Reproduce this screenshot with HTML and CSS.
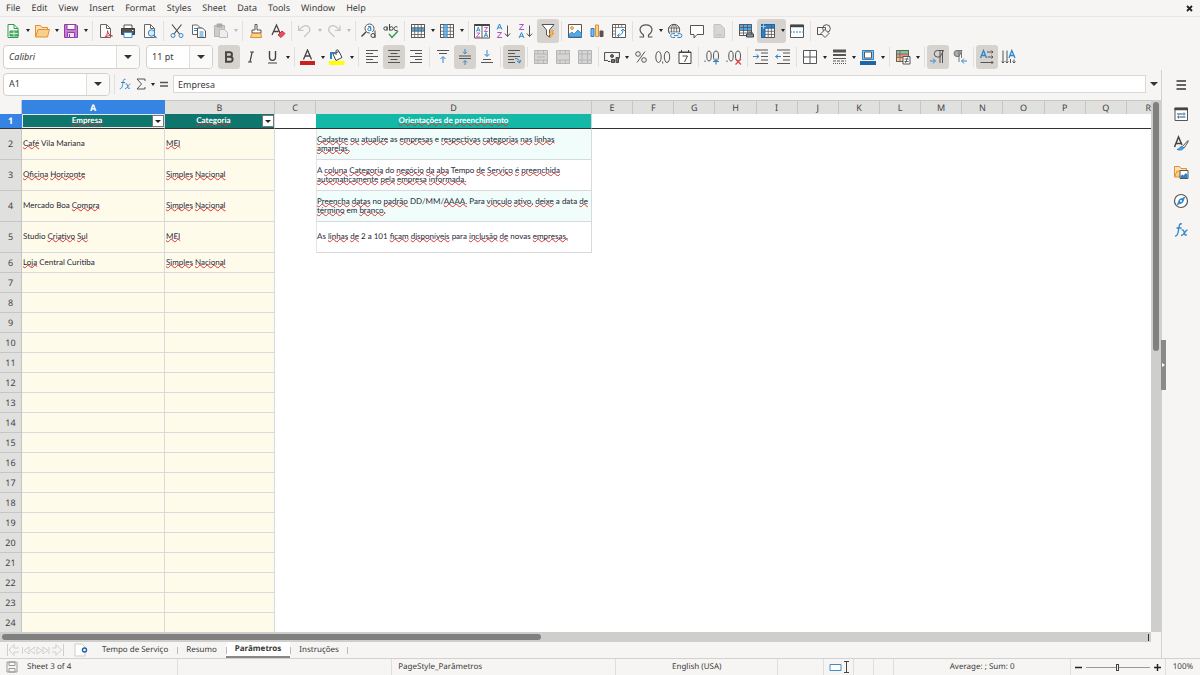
FILE: index.html
```html
<!DOCTYPE html>
<html lang="en">
<head>
<meta charset="utf-8">
<title>Parâmetros - Calc</title>
<link rel="stylesheet" href="styles.css">
</head>
<body>
<nav class="menubar">
  <button>File</button><button>Edit</button><button>View</button><button>Insert</button><button>Format</button><button>Styles</button><button>Sheet</button><button>Data</button><button>Tools</button><button>Window</button><button>Help</button>
  <button class="close" aria-label="Close document"><svg class="s7" viewBox="0 0 7 7"><path d="M1 1l5 5M6 1L1 6" stroke-width="1.8"/></svg></button>
</nav>

<div class="toolbar">
  <button class="tb" aria-label="New"><svg viewBox="0 0 16 16"><path d="M3 1.500h6l4 4v9H3z" fill="#fff" stroke="#2e9b4f"/><path d="M9 1.500v4h4" stroke="#2e9b4f"/><path d="M5 8h8v5H5z" fill="#58b872" stroke="#2e9b4f"/><path d="M5 10.500h8M9 8v5" stroke="#fff" stroke-width=".7"/></svg></button><button class="drop" aria-label="New options"></button>
  <button class="tb" aria-label="Open"><svg viewBox="0 0 16 16"><path d="M1.500 14V2.500h5l1.500 2h5.500V7" fill="#fde3b5" stroke="#e0912f"/><path d="M1.500 14l2.500-7.500h11.500L13.500 14z" fill="#f9cf8a" stroke="#e0912f"/></svg></button><button class="drop" aria-label="Open options"></button>
  <button class="tb" aria-label="Save"><svg viewBox="0 0 16 16"><path d="M1.500 1.500h11.500l1.500 1.500v11.500h-13z" fill="#c77ad6" stroke="#8e3fa3"/><path d="M4 1.500h8v5H4z" fill="#fff" stroke="#8e3fa3"/><path d="M4.500 9.500h7v5h-7z" fill="#f3e1f6" stroke="#8e3fa3"/><path d="M6.500 11v3" stroke="#8e3fa3"/></svg></button><button class="drop" aria-label="Save options"></button>
  <i class="sep"></i>
  <button class="tb" aria-label="Export as PDF"><svg viewBox="0 0 16 16"><path d="M2.500 1.500h6l4 4v9h-10z" fill="#fafafa" stroke="#666"/><path d="M8.500 1.500v4h4" stroke="#666"/><path d="M7 14c2-2 3-4 2.500-6.500M9.500 8c.5 3 2 4.500 5 5-3-.8-5-.5-7.500 1.500" stroke="#d9363e"/></svg></button>
  <button class="tb" aria-label="Print"><svg viewBox="0 0 16 16"><path d="M4 5V2h8v3" fill="#fff"/><path d="M1.500 5.500h13v6h-13z" fill="#4d5357" stroke="#3a3a38"/><path d="M4 9.500h8v5H4z" fill="#fff" stroke="#3c8fd0"/><path d="M12 7.500h1.500" stroke="#fff"/></svg></button>
  <button class="tb" aria-label="Print preview"><svg viewBox="0 0 16 16"><path d="M2.500 1.500h6l4 4v9h-10z" fill="#fafafa" stroke="#666"/><path d="M8.500 1.500v4h4" stroke="#666"/><circle cx="9.500" cy="10" r="3.200" fill="#d7ebfa" stroke="#2f86cb"/><path d="M11.800 12.300l2.700 2.700" stroke="#2f86cb" stroke-width="1.300"/></svg></button>
  <i class="sep"></i>
  <button class="tb" aria-label="Cut"><svg viewBox="0 0 16 16"><path d="M3 1.500l7.500 9.500M12.500 1.500L5 11" stroke="#444" stroke-width="1.100"/><circle cx="4" cy="12.500" r="2" stroke="#2f86cb"/><circle cx="12" cy="12.500" r="2" stroke="#2f86cb"/></svg></button>
  <button class="tb" aria-label="Copy"><svg viewBox="0 0 16 16"><path d="M1.500 2h5l3 3v6.500h-8z" fill="#fff" stroke="#666"/><path d="M3 5.500h3M3 7.500h3" stroke="#2f86cb"/><path d="M6.500 5h5l3 3v6.500h-8z" fill="#fff" stroke="#555"/><path d="M8.500 9h4M8.500 11h4M8.500 13h4" stroke="#2f86cb"/></svg></button>
  <button class="tb" disabled aria-label="Paste"><svg viewBox="0 0 16 16"><path d="M1.500 2.500h10v11h-10z" fill="#ccc" stroke="#b5b5b5"/><path d="M4 1h5v3H4z" fill="#aaa" stroke="#aaa"/><path d="M6.500 6.500h5l3 3v5h-8z" fill="#eee" stroke="#bbb"/></svg></button><button class="drop off" disabled aria-label="Paste options"></button>
  <i class="sep"></i>
  <button class="tb" aria-label="Clone formatting"><svg viewBox="0 0 16 16"><path d="M7 1.500h2V7h4v3H4V7h3z" fill="#fff" stroke="#555"/><path d="M4 10.500h9l.5 4h-11z" fill="#fbd28e" stroke="#e0912f"/></svg></button>
  <button class="tb" aria-label="Clear formatting"><svg viewBox="0 0 16 16"><path d="M2 12L6.500 2 10 10M3.500 8.500h5" stroke="#444" stroke-width="1.300"/><path d="M8 12l4-4 3 2.500-4 4z" fill="#e8505b" stroke="#c9303c"/></svg></button>
  <i class="sep"></i>
  <button class="tb" disabled aria-label="Undo"><svg viewBox="0 0 16 16"><path d="M1.500 2.500v5h5M2 7l4-3.500c4-2.500 8 1 6.500 5L7 14" stroke="#c4c4c4" stroke-width="1.200"/></svg></button><button class="drop off" disabled aria-label="Undo list"></button>
  <button class="tb" disabled aria-label="Redo"><svg viewBox="0 0 16 16"><path d="M14 2.500v5H9M13.500 7l-4-3.500c-4-2.500-8 1-6.500 5L8.500 14" stroke="#c4c4c4" stroke-width="1.200"/></svg></button><button class="drop off" disabled aria-label="Redo list"></button>
  <i class="sep"></i>
  <button class="tb" aria-label="Find and replace"><svg viewBox="0 0 16 16"><circle cx="8.500" cy="5.500" r="4.500" fill="#fff" stroke="#555"/><path d="M5 9l-4.500 4.500" stroke="#444" stroke-width="1.500"/><circle cx="8.300" cy="6.200" r="1.500" stroke="#2f86cb"/><path d="M7 3.500h2.800v4.500" stroke="#2f86cb"/><path d="M9 9h6v6H9z" fill="#f6f5f4" stroke="none"/><circle cx="12" cy="12.500" r="2" stroke="#444"/><path d="M14 7.500V15" stroke="#444"/></svg></button>
  <button class="tb" aria-label="Spelling"><svg viewBox="0 0 16 16"><circle cx="2.500" cy="5.500" r="1.700" stroke="#444"/><path d="M4.200 3.500v4M6.500 1v6.500M14.500 4.300a2 2 0 100 2.700" stroke="#444"/><circle cx="8.300" cy="5.500" r="1.800" stroke="#444"/><path d="M6 11l3 3.500L15 8" stroke="#2e9b4f" stroke-width="1.400"/></svg></button>
  <i class="sep"></i>
  <button class="tb" aria-label="Row"><svg viewBox="0 0 16 16"><path d="M1.500 1.500h13v13h-13z" fill="#fff"/><path d="M2 4.700h12v3.500H2z" fill="#4ea9ea" stroke="none"/><path d="M1.500 1.500h13v13h-13zM1.500 4.700h13M1.500 8.200h13M1.500 11.500h13M4.700 1.500v13M8 1.500v13M11.300 1.500v13" stroke="#555" stroke-width=".8"/></svg></button><button class="drop" aria-label="Row options"></button>
  <button class="tb" aria-label="Column"><svg viewBox="0 0 16 16"><path d="M1.500 1.500h13v13h-13z" fill="#fff"/><path d="M1.500 1.500h13v13h-13zM1.500 4.700h13M1.500 8.200h13M1.500 11.500h13M4.700 1.500v13M8 1.500v13M11.300 1.500v13" stroke="#555" stroke-width=".8"/><path d="M4.700 1.500h4v13h-4z" fill="#4ea9ea" fill-opacity=".8" stroke="none"/></svg></button><button class="drop" aria-label="Column options"></button>
  <i class="sep"></i>
  <button class="tb" aria-label="Sort"><svg viewBox="0 0 16 16"><path d="M.5 1.500h15v13.500H.5zM8 3v12" fill="#fff" stroke="#555"/><path d="M.5 2h15" stroke="#444" stroke-width="2"/><path d="M2.500 8.500l1.800-4.500 1.700 4.500M3 7.200h2.500M10.200 14l1.800-4.500 1.700 4.500M10.700 12.700h2.500" stroke="#2f86cb" stroke-width=".9"/><path d="M2.500 10h3.300l-3.300 4h3.500M10.300 4.500h3.300l-3.300 4h3.500" stroke="#b04fc0" stroke-width=".9"/></svg></button>
  <button class="tb" aria-label="Sort ascending"><svg viewBox="0 0 16 16"><path d="M1 6.500L3.500 1 6 6.500M2 4.800h3" stroke="#2f86cb"/><path d="M1.300 9.500h4.200l-4.200 5h4.700" stroke="#b04fc0"/><path d="M11.500 2.500v11M8.800 10.500l2.700 3 2.700-3"/></svg></button>
  <button class="tb" aria-label="Sort descending"><svg viewBox="0 0 16 16"><path d="M1 15l2.500-5.500L6 15M2 13.300h3" stroke="#2f86cb"/><path d="M1.300 1.500h4.200l-4.200 5h4.700" stroke="#b04fc0"/><path d="M11.500 2.500v11M8.800 10.500l2.700 3 2.700-3"/></svg></button>
  <button class="tb on" aria-label="AutoFilter"><svg viewBox="0 0 16 16"><path d="M2 1.500h12L9.500 7v7L6.500 12V7z" fill="#fff" stroke="#555"/><path d="M12 7l-3 4.500h2l-1.500 3.500 4.500-4.500h-2l1.500-3z" fill="#fbc16b" stroke="#e0912f" stroke-width=".8"/></svg></button>
  <i class="sep"></i>
  <button class="tb" aria-label="Image"><svg viewBox="0 0 16 16"><path d="M1.500 1.500h13v13h-13z" fill="#fff" stroke="#555"/><circle cx="5" cy="5" r="1.500" fill="#fbc16b" stroke="#e0912f" stroke-width=".8"/><path d="M2 14v-2.500L5 9l2 2 4-4 3.500 3.500V14z" fill="#58a9e6" stroke="#2f7fc4" stroke-width=".8"/></svg></button>
  <button class="tb" aria-label="Chart"><svg viewBox="0 0 16 16"><path d="M2 5.500h3v8H2z" fill="#79bbee" stroke="#2f7fc4"/><path d="M6.500 2h3v11.500h-3z" fill="#fbd08a" stroke="#e0912f"/><path d="M11 8h3v5.500h-3z" fill="#555" stroke="#555"/></svg></button>
  <button class="tb" aria-label="Pivot table"><svg viewBox="0 0 16 16"><path d="M1.500 1.500h13v13h-13z" fill="#fff" stroke="#555"/><path d="M1.500 4.500h13M4.500 1.500v13M7.500 1.500v3M10.800 1.500v3M1.500 8h3M1.500 11h3" stroke="#666" stroke-width=".8"/><path d="M6.500 12.500c3.500 0 5.500-2 5.500-6M10 8l2-2 2 2M8.500 10.500l-2 2 2 2" stroke="#2f86cb"/></svg></button>
  <i class="sep"></i>
  <button class="tb" aria-label="Special character"><svg viewBox="0 0 16 16"><path d="M1.500 14h4v-2C-.5 7.500 2 1.800 8 1.800s8.500 5.700 2.500 10.200v2h4" stroke="#555" stroke-width="1.200"/></svg></button><button class="drop" aria-label="Symbols"></button>
  <button class="tb" aria-label="Hyperlink"><svg viewBox="0 0 16 16"><circle cx="7" cy="7" r="5.700" stroke="#555"/><ellipse cx="7" cy="7" rx="2.700" ry="5.700" stroke="#555" stroke-width=".8"/><path d="M1.500 5h11M1.500 9h11M7 1.300v11" stroke="#555" stroke-width=".8"/><path d="M3 9.500h12v6H3z" fill="#f6f5f4" stroke="none"/><path d="M8 10.700H5.500a1.900 1.900 0 000 3.800H8M10.500 10.700H13a1.900 1.900 0 010 3.800h-2.500M7 12.600h4.500" stroke="#2f86cb"/></svg></button>
  <button class="tb" aria-label="Comment"><svg viewBox="0 0 16 16"><path d="M1.500 2.500h13v9H8l-3 3.500v-3.500H1.500z" fill="#fff" stroke="#555"/></svg></button>
  <button class="tb" disabled aria-label="Headers and footers"><svg viewBox="0 0 16 16"><path d="M3 1.500h6.500l4 4v9H3z" fill="#d6d6d6" stroke="#c2c2c2"/><path d="M5 12h6" stroke="#bbb"/></svg></button>
  <i class="sep"></i>
  <button class="tb" aria-label="Print area"><svg viewBox="0 0 16 16"><path d="M1.500 1.500h12v11h-12z" fill="#fff"/><path d="M1.500 1.500h12v6h-12z" fill="#4ea9ea" stroke="none"/><path d="M1.500 1.500h12v11h-12zM1.500 4.500h12M1.500 7.500h12M1.500 10h12M5.500 1.500v11M9.500 1.500v11" stroke="#555" stroke-width=".8"/><path d="M8.500 11h7v3h-7zM10 9h4v2" fill="#7e99ac" stroke="#444"/></svg></button>
  <span class="pair"><button class="tb" aria-label="Freeze rows and columns"><svg viewBox="0 0 16 16"><path d="M1.500 1.500h13v13h-13z" fill="#fff" stroke="#555"/><path d="M1.500 1.500h13v3.700h-9.500v9.300H1.500z" fill="#2f7fc4" stroke="#1f66a6"/><path d="M5 8.300h9.500M5 11.400h9.500M8.200 5v9.500M11.400 2v12.500" stroke="#555" stroke-width=".8"/><path d="M1 3.500h5M3.500 1v5" stroke="#bfe0f8" stroke-width=".7"/></svg></button><button class="drop" aria-label="Freeze options"></button></span>
  <button class="tb" aria-label="Split window"><svg viewBox="0 0 16 16"><path d="M1.500 2h13v12.500h-13z" fill="#fff" stroke="#555"/><path d="M1 3h14" stroke="#444" stroke-width="2.500"/><path d="M1 9h14" stroke="#2f86cb" stroke-dasharray="2 1"/></svg></button>
  <i class="sep"></i>
  <button class="tb" aria-label="Show draw functions"><svg viewBox="0 0 16 16"><path d="M1.500 4.500h8v7h-8z" stroke="#555"/><circle cx="10.500" cy="5.500" r="3.800" stroke="#555"/><path d="M9 6.500l4 4-4 4-4-4z" fill="#f6f5f4" stroke="#555"/></svg></button>
</div>

<div class="toolbar second">
  <div class="combo font"><input type="text" value="Calibri" aria-label="Font name"><button class="arrow" aria-label="Font list"></button></div>
  <div class="combo size"><input type="text" value="11 pt" aria-label="Font size"><button class="arrow" aria-label="Size list"></button></div>
  <button class="tb on" aria-label="Bold"><svg viewBox="0 0 16 16"><path d="M5 3.300h3.500c3.300 0 3.300 4.400 0 4.400H5zM5 7.700h4c3.500 0 3.500 5 0 5H5z" stroke="#444" stroke-width="1.900"/></svg></button>
  <button class="tb" aria-label="Italic"><svg viewBox="0 0 16 16"><path d="M7 3h4M5 13h4M9.200 3L6.900 13" stroke="#444" stroke-width="1.200"/></svg></button>
  <button class="tb" aria-label="Underline"><svg viewBox="0 0 16 16"><path d="M4.500 2v6c0 4.500 6 4.500 6 0V2" stroke="#444" stroke-width="1.400"/><path d="M3 14h9" stroke="#444"/></svg></button><button class="drop" aria-label="Underline styles"></button>
  <i class="sep"></i>
  <button class="tb" aria-label="Font color"><svg viewBox="0 0 16 16"><path d="M3.500 10.500L7.500 1l4 9.500M5 7h5" stroke="#444" stroke-width="1.300"/><path d="M0 12h15v4H0z" fill="#c9211e" stroke="none"/></svg></button><button class="drop" aria-label="Font colors"></button>
  <button class="tb" aria-label="Background color"><svg viewBox="0 0 16 16"><path d="M4 5l6-2.500 3 6-6 3z" fill="#fff" stroke="#444"/><path d="M7 6V2c0-1.500 2.500-1.500 2.500 0" stroke="#444"/><path d="M2 10V4h4" stroke="#2f7fc4" stroke-width="2"/><path d="M0 12h15.500v4H0z" fill="#ff0" stroke="none"/></svg></button><button class="drop" aria-label="Background colors"></button>
  <i class="sep"></i>
  <button class="tb" aria-label="Align left"><svg viewBox="0 0 16 16"><path d="M2 1.500h12M2 4.500h7M2 7.500h12M2 10.500h7M2 13.500h12"/></svg></button>
  <button class="tb on" aria-label="Center"><svg viewBox="0 0 16 16"><path d="M2 1.500h12M4.500 4.500h7M2 7.500h12M4.500 10.500h7M2 13.500h12"/></svg></button>
  <button class="tb" aria-label="Align right"><svg viewBox="0 0 16 16"><path d="M2 1.500h12M7 4.500h7M2 7.500h12M7 10.500h7M2 13.500h12"/></svg></button>
  <i class="sep"></i>
  <button class="tb" aria-label="Align top"><svg viewBox="0 0 16 16"><path d="M2 1.500h12M4 4.500h8"/><path d="M8 14V8M5.500 10L8 7.500l2.500 2.500" stroke="#2f86cb"/></svg></button>
  <button class="tb on" aria-label="Center vertically"><svg viewBox="0 0 16 16"><path d="M2 7h12M2 9.500h12"/><path d="M8 0v4.500M6 2.800l2 2 2-2M8 16v-4M6 13.500l2-2 2 2" stroke="#2f86cb"/></svg></button>
  <button class="tb" aria-label="Align bottom"><svg viewBox="0 0 16 16"><path d="M4 10.500h8M2 13.500h12"/><path d="M8 1v6M5.500 5L8 7.500 10.500 5" stroke="#2f86cb"/></svg></button>
  <i class="sep"></i>
  <button class="tb on" aria-label="Wrap text"><svg viewBox="0 0 16 16"><path d="M2 1.500h12M2 4.500h7M2 7.500h12M2 10.500h6M2 13.500h7"/><path d="M9 9.500c3 0 4 1 4.500 4M11 12l2.500 2 1.500-3" stroke="#2f86cb"/></svg></button>
  <i class="sep"></i>
  <button class="tb" disabled aria-label="Merge and center"><svg viewBox="0 0 16 16"><path d="M1.500 1.500h13v13h-13zM1.500 5h13M1.500 11h13M5 1.500V5M10.500 1.500V5M5 11v3.500M10.500 11v3.500M4 8h8" fill="#d5d5d5" stroke="#b5b5b5"/></svg></button>
  <button class="tb" disabled aria-label="Merge cells"><svg viewBox="0 0 16 16"><path d="M1.500 1.500h13v13h-13zM1.500 5h13M1.500 11h13M5 1.500V5M10.500 1.500V5M5 11v3.500M10.500 11v3.500" fill="#d5d5d5" stroke="#b5b5b5"/></svg></button>
  <button class="tb" disabled aria-label="Unmerge cells"><svg viewBox="0 0 16 16"><path d="M1.500 1.500h13v13h-13zM1.500 5h13M1.500 11h13M5 1.500v13M10.500 1.500v13" fill="#d5d5d5" stroke="#b5b5b5"/></svg></button>
  <i class="sep"></i>
  <button class="tb" aria-label="Format as currency"><svg viewBox="0 0 16 16"><path d="M.5 3.500h15v6M.5 3.500v8H4" stroke="#555" stroke-width="1.200"/><circle cx="8" cy="7" r="1.500" fill="#555"/><path d="M4 12.500h2.500M7.500 13.500v-3h3v3zM12 13.500v-5h2.500v5z" fill="#777" stroke="#444"/></svg></button><button class="drop" aria-label="Currencies"></button>
  <button class="tb" aria-label="Format as percent"><svg viewBox="0 0 16 16"><circle cx="5" cy="5" r="2.300"/><circle cx="11" cy="11" r="2.300"/><path d="M12 2.500L4 13.500"/></svg></button>
  <button class="tb" aria-label="Format as number"><svg viewBox="0 0 16 16"><ellipse cx="3.500" cy="8" rx="2.700" ry="5.500"/><ellipse cx="12" cy="8" rx="2.700" ry="5.500"/><path d="M7.700 12.500v2"/></svg></button>
  <button class="tb" aria-label="Format as date"><svg viewBox="0 0 16 16"><path d="M2 3h12v11.500H2zM2 3.500h12M4.500 1v3M11.500 1v3" fill="#fff" stroke="#444"/><path d="M5.500 7h5l-3 6" stroke="#444"/></svg></button>
  <i class="sep"></i>
  <button class="tb" aria-label="Add decimal place"><svg viewBox="0 0 16 16"><ellipse cx="5" cy="7" rx="2.200" ry="5"/><ellipse cx="12" cy="7" rx="2.500" ry="5"/><path d="M1 11.500V13"/><path d="M12 9.500v6M9 12.500h6" stroke="#2f86cb" stroke-width="1.200"/></svg></button>
  <button class="tb" aria-label="Delete decimal place"><svg viewBox="0 0 16 16"><ellipse cx="5" cy="7" rx="2.200" ry="5"/><ellipse cx="12" cy="7" rx="2.500" ry="5"/><path d="M1 11.500V13"/><path d="M9.500 10l5.500 5.500M15 10l-5.500 5.500" stroke="#e0434c" stroke-width="1.200"/></svg></button>
  <i class="sep"></i>
  <button class="tb" aria-label="Increase indent"><svg viewBox="0 0 16 16"><path d="M2 1h13M8 4h7M8 7.500h7M8 11h7M2 14.500h13"/><path d="M0 7.500h5.500M3.500 5.500l2.500 2-2.500 2" stroke="#2f86cb"/></svg></button>
  <button class="tb" aria-label="Decrease indent"><svg viewBox="0 0 16 16"><path d="M2 1h13M8 4h7M8 7.500h7M8 11h7M2 14.500h13"/><path d="M.5 7.500H6M3 5.500l-2.500 2 2.500 2" stroke="#2f86cb"/></svg></button>
  <i class="sep"></i>
  <button class="tb" aria-label="Borders"><svg viewBox="0 0 16 16"><path d="M1.500 1.500h13v13h-13zM8 1.500v13M1.500 8h13" fill="#fff"/></svg></button><button class="drop" aria-label="Border list"></button>
  <button class="tb" aria-label="Border style"><svg viewBox="0 0 16 16"><path d="M2 2h13" stroke-width="3"/><path d="M2 6h13" stroke-width="2"/><path d="M2 9.500h13"/><path d="M2 12h13" stroke-dasharray="3 1"/><path d="M2 14.500h13" stroke-dasharray="1 1"/></svg></button><button class="drop" aria-label="Border styles"></button>
  <button class="tb" aria-label="Border color"><svg viewBox="0 0 16 16"><path d="M2.500 1.500h11v9h-11z" fill="#8cc4f0" stroke="#2f7fc4"/><path d="M4.500 3h7v6h-7z" fill="#fff" stroke="#555"/><path d="M0 12h16v4H0z" fill="#1f66a6" stroke="none"/></svg></button><button class="drop" aria-label="Border colors"></button>
  <i class="sep"></i>
  <button class="tb" aria-label="Conditional formatting"><svg viewBox="0 0 16 16"><path d="M1.500 1.500h12v11h-12z" fill="#fff"/><path d="M2 2h11v3H2z" fill="#7fcb93" stroke="none"/><path d="M2 5h11v3H2z" fill="#f08a7b" stroke="none"/><path d="M2 8h6v4H2z" fill="#fbc98a" stroke="none"/><path d="M1.500 1.500h12v11h-12zM1.500 5h12M1.500 8.500h12M5 1.500v11" stroke="#666" stroke-width=".8"/><path d="M8 7.500h7v7.500H8z" fill="#fff" stroke="#555"/><path d="M9.500 10h4M9.500 12.500h4M12.500 8.500l-2 5.500" stroke="#444" stroke-width=".8"/></svg></button><button class="drop" aria-label="Conditional options"></button>
  <i class="sep"></i>
  <button class="tb on" aria-label="Left-to-right"><svg viewBox="0 0 16 16"><path d="M13.500 1.500H7.500a3 3 0 000 6.500H10zM10 1.500V14M12.500 1.500V14"/><path d="M0 12h5M3 9.500L5.500 12 3 14.500" stroke="#2f86cb"/></svg></button>
  <button class="tb" aria-label="Right-to-left"><svg viewBox="0 0 16 16"><path d="M10 1.500H5a3 3 0 000 6h2zM7 1.500V13M9.500 1.500V9" fill="#aaa" stroke="#777"/><path d="M15 12h-5M12 9.500L9.500 12l2.500 2.500" stroke="#2f86cb"/></svg></button>
  <i class="sep"></i>
  <button class="tb on" aria-label="Horizontal text"><svg viewBox="0 0 16 16"><path d="M1.500 9L4.500 1.500 7.500 9M2.700 6.500h4" stroke="#2f86cb" stroke-width="1.300"/><path d="M8 3h6M12.500 1.500L14 3l-1.500 1.500M8.500 8H14M12.500 6.500L14 8l-1.500 1.500M1.500 13.500H14M12.500 12l1.500 1.500-1.500 1.500"/></svg></button>
  <button class="tb" aria-label="Vertical text"><svg viewBox="0 0 16 16"><path d="M8 9l2.800-7.500L14 9M9.200 6.500h3.600" stroke="#2f86cb" stroke-width="1.300"/><path d="M2 1.500V14M.5 12.500L2 14l1.500-1.500M6 1.500V14M4.500 12.500L6 14l1.500-1.500M13 10.500V14M11.500 12.500L13 14l1.500-1.500M9.500 10v4"/></svg></button>
</div>

<div class="workspace">
  <main class="doc">
    <div class="formula-bar">
      <div class="combo name"><input type="text" value="A1" aria-label="Name box"><button class="arrow" aria-label="Names"></button></div>
      <i class="sep"></i>
      <button class="fx" aria-label="Function wizard"><svg class="s12" viewBox="0 0 12 12"><path d="M6.500 1.500C4.500.5 4.300 2.500 4 4.500S3.300 11 .8 10.700M2 4.500h4M6.500 6c1.500-.8 1.800.5 2.200 2.500s1 2.500 2.300 1.500M11.300 6C9.500 6 8.500 11 6 10.500" stroke="#2f86cb"/></svg></button>
      <button class="fx" aria-label="Sum"><svg class="s12" viewBox="0 0 12 12"><path d="M10 3V1H2l4.500 5L2 11h8V9"/></svg></button><button class="drop" aria-label="Functions"></button>
      <button class="fx" aria-label="Formula"><svg class="s12" viewBox="0 0 12 12"><path d="M2 4.500h8M2 8h8" stroke-width="1.500"/></svg></button>
      <input class="formula" type="text" value="Empresa" aria-label="Formula input">
      <button class="arrow" aria-label="Expand formula bar"></button>
    </div>

    <div class="sheet">
      <div class="grid">
        <table>
          <colgroup><col class="rn"><col class="ca"><col class="cb"><col class="cc"><col class="cd"><col span="13"><col class="cr"></colgroup>
          <thead><tr class="letters"><th></th><th class="sel">A</th><th>B</th><th>C</th><th>D</th><th>E</th><th>F</th><th>G</th><th>H</th><th>I</th><th>J</th><th>K</th><th>L</th><th>M</th><th>N</th><th>O</th><th>P</th><th>Q</th><th class="cut">R</th></tr></thead>
          <tbody>
            <tr class="first"><th class="sel">1</th><td class="head cursor"><u>Empresa</u><button class="filter" aria-label="Filter Empresa"></button></td><td class="head"><u>Categoria</u><button class="filter" aria-label="Filter Categoria"></button></td><td></td><td class="head guide"><u>Orientações</u> <u>de</u> <u>preenchimento</u></td><td colspan="14"></td></tr>
            <tr class="tall"><th>2</th><td class="in"><u>Café</u> Vila Mariana</td><td class="in"><u>MEI</u></td><td></td><td class="tip alt"><u>Cadastre</u> <u>ou</u> <u>atualize</u> as <u>empresas</u> e <u>respectivas</u> <u>categorias</u> <u>nas</u> <u>linhas</u><br><u>amarelas.</u></td><td colspan="14"></td></tr>
            <tr class="tall"><th>3</th><td class="in"><u>Oficina</u> <u>Horizonte</u></td><td class="in"><u>Simples</u> <u>Nacional</u></td><td></td><td class="tip">A <u>coluna</u> <u>Categoria</u> do <u>negócio</u> <u>da</u> <u>aba</u> Tempo <u>de</u> <u>Serviço</u> <u>é</u> <u>preenchida</u> <u>automaticamente</u> <u>pela</u> <u>empresa</u> <u>informada.</u></td><td colspan="14"></td></tr>
            <tr class="tall"><th>4</th><td class="in">Mercado Boa <u>Compra</u></td><td class="in"><u>Simples</u> <u>Nacional</u></td><td></td><td class="tip alt"><u>Preencha</u> <u>datas</u> no <u>padrão</u> DD/MM/<u>AAAA.</u> Para <u>vínculo</u> <u>ativo,</u> <u>deixe</u> a data <u>de</u> <u>término</u> em <u>branco.</u></td><td colspan="14"></td></tr>
            <tr class="tall"><th>5</th><td class="in">Studio <u>Criativo</u> <u>Sul</u></td><td class="in"><u>MEI</u></td><td></td><td class="tip">As <u>linhas</u> <u>de</u> 2 a 101 <u>ficam</u> <u>disponíveis</u> para <u>inclusão</u> <u>de</u> novas <u>empresas.</u></td><td colspan="14"></td></tr>
            <tr><th>6</th><td class="in"><u>Loja</u> Central Curitiba</td><td class="in"><u>Simples</u> <u>Nacional</u></td><td colspan="16"></td></tr>
            <tr><th>7</th><td class="in"></td><td class="in"></td><td colspan="16"></td></tr>
            <tr><th>8</th><td class="in"></td><td class="in"></td><td colspan="16"></td></tr>
            <tr><th>9</th><td class="in"></td><td class="in"></td><td colspan="16"></td></tr>
            <tr><th>10</th><td class="in"></td><td class="in"></td><td colspan="16"></td></tr>
            <tr><th>11</th><td class="in"></td><td class="in"></td><td colspan="16"></td></tr>
            <tr><th>12</th><td class="in"></td><td class="in"></td><td colspan="16"></td></tr>
            <tr><th>13</th><td class="in"></td><td class="in"></td><td colspan="16"></td></tr>
            <tr><th>14</th><td class="in"></td><td class="in"></td><td colspan="16"></td></tr>
            <tr><th>15</th><td class="in"></td><td class="in"></td><td colspan="16"></td></tr>
            <tr><th>16</th><td class="in"></td><td class="in"></td><td colspan="16"></td></tr>
            <tr><th>17</th><td class="in"></td><td class="in"></td><td colspan="16"></td></tr>
            <tr><th>18</th><td class="in"></td><td class="in"></td><td colspan="16"></td></tr>
            <tr><th>19</th><td class="in"></td><td class="in"></td><td colspan="16"></td></tr>
            <tr><th>20</th><td class="in"></td><td class="in"></td><td colspan="16"></td></tr>
            <tr><th>21</th><td class="in"></td><td class="in"></td><td colspan="16"></td></tr>
            <tr><th>22</th><td class="in"></td><td class="in"></td><td colspan="16"></td></tr>
            <tr><th>23</th><td class="in"></td><td class="in"></td><td colspan="16"></td></tr>
            <tr><th>24</th><td class="in"></td><td class="in"></td><td colspan="16"></td></tr>
          </tbody>
        </table>
      </div>
      <div class="vscroll"><div class="thumb"></div></div>
    </div>
    <div class="hscroll"><div class="thumb"></div><i class="split"></i></div>

    <div class="tabs">
      <div class="tabnav">
        <button disabled aria-label="First sheet"><svg class="nav" viewBox="0 0 14 14"><path d="M1.500 1v12M13 5H8V1.500L3 7l5 5.500V9h5"/></svg></button>
        <button disabled aria-label="Previous sheet"><svg class="nav" viewBox="0 0 14 14"><path d="M1.500 4v7M8 4L3 7.500 8 11zM14 4L9 7.500l5 3.500z"/></svg></button>
        <button disabled aria-label="Next sheet"><svg class="nav" viewBox="0 0 14 14"><path d="M1 4l5 3.500L1 11zM7 4l5 3.500L7 11zM13 4v7"/></svg></button>
        <button disabled aria-label="Last sheet"><svg class="nav" viewBox="0 0 14 14"><path d="M12.500 1v12M1 5h4V1.500L10.500 7 5 12.500V9H1"/></svg></button>
      </div>
      <button class="add" aria-label="Add sheet"><svg class="s14" viewBox="0 0 14 14"><path d="M1 1h7l3 3v9H1z" fill="#fff" stroke="#ccc"/><circle cx="10.500" cy="7" r="2" fill="#fff" stroke="#1f5fae" stroke-width="1.400"/></svg></button>
      <button class="tab">Tempo de Serviço</button><button class="tab">Resumo</button><button class="tab current">Parâmetros</button><button class="tab">Instruções</button>
    </div>
  </main>

  <aside class="sidebar">
    <button class="grip" aria-label="Hide sidebar"></button>
    <button aria-label="Sidebar settings"><svg viewBox="0 0 16 16"><path d="M3.500 4h9.500M3.500 8h9.500M3.500 12h9.500" stroke="#333" stroke-width="1.500"/></svg></button>
    <button aria-label="Properties"><svg viewBox="0 0 16 16"><path d="M2 2h12.500v12.500H2z" fill="#fff" stroke="#555"/><path d="M1.500 3h13.500" stroke="#444" stroke-width="2.500"/><path d="M4 8h5M7.500 11h5" stroke="#444"/><path d="M9 8h3.500M11 6.500v3M4 11h4M5.500 9.500v3" stroke="#2f86cb"/></svg></button>
    <button aria-label="Styles"><svg viewBox="0 0 16 16"><path d="M1.500 12L5.500 2 9 10M3 8.500h5" stroke="#444" stroke-width="1.500"/><path d="M15 5.500l-5.500 6 1.500 1.500 4-6z" fill="#fff" stroke="#555"/><path d="M4 14.500c3 0 2-3 5-3l1.500 1.500c-.5 2-3.500 2.500-6.500 1.500z" fill="#4ea9ea" stroke="#2f7fc4"/></svg></button>
    <button aria-label="Gallery"><svg viewBox="0 0 16 16"><path d="M1.500 13V2.500h5l1.500 2h5.500V7" fill="#fde3b5" stroke="#e0912f"/><path d="M1.500 13L4 7h9v6z" fill="#f9cf8a" stroke="#e0912f"/><path d="M7 6.500h8v8H7z" fill="#fff" stroke="#555"/><path d="M7.500 14v-2l2-1.500 1 1L13 9l1.500 2v3z" fill="#2f7fc4" stroke="none"/></svg></button>
    <button aria-label="Navigator"><svg viewBox="0 0 16 16"><circle cx="8" cy="8" r="6.500" fill="#fff" stroke="#555" stroke-width="1.200"/><path d="M11.500 4.500l-2 5-5 2 2-5z" fill="#2f86cb" stroke="#2f86cb"/><circle cx="8" cy="8" r="1" fill="#fff" stroke="none"/></svg></button>
    <button aria-label="Functions"><svg viewBox="0 0 16 16"><path d="M9 2C6.500 1 6.200 3.500 5.800 6S5 14.500 2 14M3.500 6h5M8.500 8c2-.8 2.300.8 2.800 3s1 2.800 2.500 1.500M14.500 8c-2.500 0-3.300 6-6.500 5.500" stroke="#2f86cb" stroke-width="1.300"/></svg></button>
  </aside>
</div>

<footer class="status">
  <span class="c-save"><svg class="s12" viewBox="0 0 12 12"><path d="M1 1h9.500l.5.5V11H1zM3 1h6v3.500H3zM3 7.500h6V11H3z" stroke="#999"/></svg></span>
  <span class="c-sheet">Sheet 3 of 4</span><span class="c-find"></span><span class="c-style">PageStyle_Parâmetros</span><span class="c-lang">English (USA)</span><span class="c-ins"></span>
  <span class="c-sel"><svg class="sel-icon" viewBox="0 0 20 12"><path d="M1 3.500h11v6H1z" fill="#fff" stroke="#3c8fc4"/><path d="M15 .5h5M15 11.500h5M17.500 .5v11" stroke="#444"/></svg></span>
  <span class="c-tiny"></span><span class="c-tiny"></span><span class="c-sum">Average: ; Sum: 0</span>
  <span class="c-zoom"><button aria-label="Zoom out"><svg class="s7" viewBox="0 0 7 7"><path d="M0 3.500h7" stroke-width="1.500"/></svg></button><input type="range" min="0" max="100" value="49" aria-label="Zoom"><button aria-label="Zoom in"><svg class="s7" viewBox="0 0 7 7"><path d="M0 3.500h7M3.500 0v7" stroke-width="1.500"/></svg></button></span>
  <span class="c-pct">100%</span>
</footer>
</body>
</html>
```
FILE: styles.css
```css
* { box-sizing: border-box; }
body {
  margin: 0; height: 100vh; display: flex; flex-direction: column; overflow: hidden;
  background: #f6f5f4; color: #3a3a3a; font: 9px/12px "Noto Sans", "Open Sans", sans-serif;
  text-rendering: geometricPrecision;
}
button { border: 0; padding: 0; margin: 0; background: none; color: inherit; font: inherit; text-rendering: inherit; display: flex; align-items: center; justify-content: center; flex: none; }
input { border: 0; padding: 0; margin: 0; background: none; color: inherit; font: inherit; min-width: 0; }
svg { width: 16px; height: 16px; fill: none; stroke: #555; display: block; flex: none; }
.s7 { width: 7px; height: 7px; stroke: #222; }
.s12 { width: 12px; height: 12px; }
.s14 { width: 14px; height: 14px; }

.menubar { display: flex; align-items: center; gap: 11px; height: 17px; flex: none; padding: 0 7px 0 6px; border-bottom: 1px solid #e9e7e5; }
.close { margin-left: auto; }

.toolbar { display: flex; align-items: center; height: 27px; flex: none; padding-left: 2px; }
.second { height: 26px; padding-left: 3px; }
.tb { width: 22px; height: 24px; border-radius: 3px; }
.on, .pair { background: #d6d2ce; }
.pair { display: flex; border-radius: 3px; }
.drop { width: 7px; height: 24px; }
.drop::before { content: ""; border: 2px solid transparent; border-top: 3px solid #222; border-bottom: 0; }
.drop.off::before { border-top-color: #bbb; }
.sep { width: 1px; height: 20px; margin: 0 2px; background: #e2e0de; flex: none; }
.drop + .sep { margin-left: 3px; }

.combo { display: flex; height: 24px; background: #fff; border: 1px solid #d3cfcb; border-radius: 4px; overflow: hidden; flex: none; }
.combo input { flex: 1; padding-left: 5px; }
.arrow { width: 23px; }
.combo .arrow { border-left: 1px solid #e0dddb; background: #fafaf9; }
.arrow::before { content: ""; border: 4px solid transparent; border-top: 4px solid #333; border-bottom: 0; }
.font { width: 137px; margin-right: 6px; font-style: italic; }
.size { width: 67px; margin-right: 5px; }
.name { width: 107px; height: 23px; margin-right: 2px; }

.workspace { display: flex; flex: 1; min-height: 0; }
.doc { display: flex; flex-direction: column; flex: 1; min-width: 0; }
.formula-bar { display: flex; align-items: center; height: 30px; flex: none; padding: 0 0 2px 3px; }
.fx { width: 16px; height: 22px; }
.formula { flex: 1; height: 18px; margin-left: 1px; padding-left: 4px; background: #fff; border: 1px solid #dad7d4; }
.formula + .arrow { width: 15px; }

.sheet { display: flex; flex: 1; min-height: 0; }
.grid { flex: 1; min-width: 0; overflow: hidden; background: #fff; }
table { width: 100%; table-layout: fixed; border-collapse: separate; border-spacing: 0; }
.rn { width: 22px; }
.ca { width: 143px; }
.cb { width: 110px; }
.cc { width: 41px; }
.cd { width: 276px; }
.cr { width: 24px; }
tr { height: 20px; }
.tall { height: 31px; }
.letters { height: 14px; }
.first { height: 15px; }
th, td { padding: 0; overflow: hidden; }
th { font-weight: 400; line-height: 12px; color: #444; background: #e0e0df; border-right: 1px solid #c6c6c5; border-bottom: 1px solid #c6c6c5; }
.letters th { height: 14px; border-top: 1px solid #c6c6c5; border-bottom: 0; font-size: 9px; }
.letters th:first-child { background: #f6f5f4; border-top-color: #f6f5f4; }
.letters .cut { text-align: right; border-right: 0; }
.letters .sel, .first .sel { background: #3584e4; border-color: #3584e4; color: #fff; font-weight: 700; }
td { font: 8px/9px Lato, sans-serif; color: #1f2937; }
.first > * { border-bottom: 1px solid #333; }
.first .sel { border-bottom-color: #333; }
.in, .tip { border-right: 1px solid #d7d9dc; border-bottom: 1px solid #d7d9dc; padding: 0 0 1px 1px; }
.in { background: #fffbeb; }
.head { position: relative; text-align: center; font-weight: 700; color: #fff; background: #0f766e; padding: 0 12px 1px 0; border-right: 1px solid #cfd5d8; }
.guide { background: #14b8a6; padding-right: 0; }
.cursor { box-shadow: inset 0 0 0 1px #e9e9e9; }
.filter { position: absolute; right: 0; top: 1px; width: 12px; height: 12px; background: #fff; border: 1px solid #777; }
.filter::before { content: ""; border: 3px solid transparent; border-top: 3px solid #222; border-bottom: 0; }
.tip { box-shadow: inset 1px 0 0 #e3e5e7; }
.alt { background: #f0fdfa; }
td u { text-decoration: underline wavy #e03030 1px; text-underline-offset: -1px; text-decoration-skip-ink: none; }

.vscroll { width: 10px; flex: none; background: #cececd; padding: 2px 2px 0; }
.vscroll .thumb { height: 47%; border-radius: 3px; background: #7f807f; }
.hscroll { display: flex; align-items: center; height: 10px; flex: none; margin-right: 10px; padding: 0 2px; background: #cececd; }
.hscroll .thumb { width: 47%; height: 6px; border-radius: 3px; background: #7f807f; }
.split { width: 1px; height: 7px; margin-left: auto; background: #333; }

.tabs { display: flex; height: 17px; flex: none; font-size: 8px; border-bottom: 1px solid #d3d1cf; }
.tabnav { display: flex; align-items: center; padding-left: 6px; gap: 1px; }
.nav { width: 14px; height: 14px; stroke: #cfcfcf; }
.add { margin: 0 5px 0 9px; }
.tab { padding: 0 9px; position: relative; }
.tab + .tab::before { content: ""; position: absolute; left: 0; top: 5px; width: 1px; height: 7px; background: #bbb; }
.tab:last-child::after { content: ""; position: absolute; right: 0; top: 5px; width: 1px; height: 7px; background: #bbb; }
.current { background: #fff; font-weight: 700; border-bottom: 2px solid #888; }

.sidebar { position: relative; width: 39px; flex: none; display: flex; flex-direction: column; align-items: center; gap: 13px; padding-top: 7px; border-left: 1px solid #d3d1cf; border-bottom: 1px solid #d3d1cf; }
.grip { position: absolute; left: -1px; top: 46%; width: 5px; height: 50px; background: #8a8a89; }
.grip::before { content: ""; border: 2px solid transparent; border-left: 3px solid #fff; border-right: 0; }

.status { display: flex; height: 16px; flex: none; font-size: 8px; }
.status > span { display: flex; align-items: center; justify-content: center; border-right: 1px solid #e0dedc; }
.status .c-save { width: 22px; border: 0; padding-left: 2px; }
.status .c-sheet { flex: 153 1 0; justify-content: flex-start; padding-left: 5px; }
.c-find { flex: 217 1 0; }
.status .c-style { flex: 221 1 0; justify-content: flex-start; padding-left: 6px; }
.c-lang { flex: 164 1 0; }
.c-ins { width: 46px; }
.c-sel { width: 30px; }
.sel-icon { width: 20px; height: 12px; }
.c-tiny { width: 20px; }
.c-sum { flex: 179 1 0; }
.status .c-zoom { width: 95px; gap: 4px; }
.status .c-pct { width: 34px; border: 0; }
input[type="range"] { appearance: none; width: 64px; height: 8px; background: linear-gradient(#999, #999) center / 100% 1px no-repeat; }
input[type="range"]::-webkit-slider-thumb { appearance: none; width: 3px; height: 7px; background: #eee; border: 1px solid #444; }
```
